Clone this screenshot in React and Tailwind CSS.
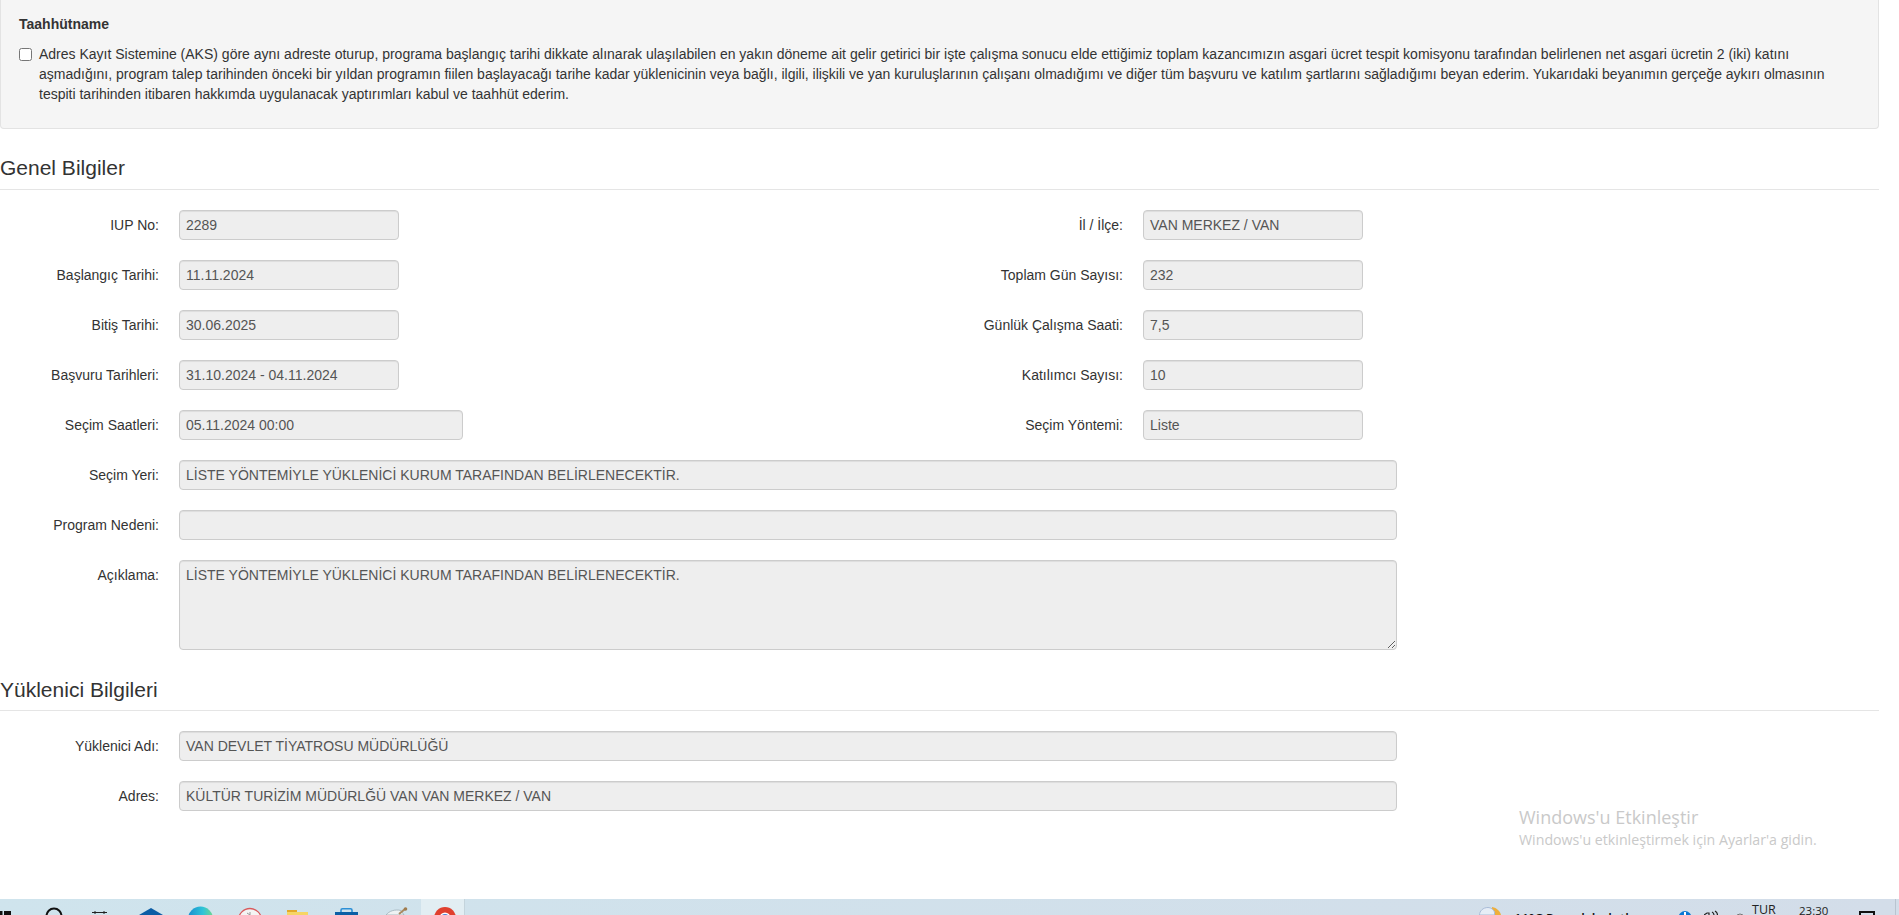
const SANS = "font-['Liberation_Sans',Arial,sans-serif]";

const leftRows = [
  ["IUP No:", "2289", "w-[220px]"],
  ["Başlangıç Tarihi:", "11.11.2024", "w-[220px]"],
  ["Bitiş Tarihi:", "30.06.2025", "w-[220px]"],
  ["Başvuru Tarihleri:", "31.10.2024 - 04.11.2024", "w-[220px]"],
  ["Seçim Saatleri:", "05.11.2024 00:00", "w-[284px]"],
];
const rightRows = [
  ["İl / İlçe:", "VAN MERKEZ / VAN"],
  ["Toplam Gün Sayısı:", "232"],
  ["Günlük Çalışma Saati:", "7,5"],
  ["Katılımcı Sayısı:", "10"],
  ["Seçim Yöntemi:", "Liste"],
];

function Field({ label, value, labelW = "w-[159px]", inputW = "w-[1218px]" }) {
  return (
    <div className="flex items-center gap-[20px]">
      <span className={`${labelW} shrink-0 text-right text-[14px] text-[#333]`}>{label}</span>
      <div className={`${inputW} h-[30px] rounded-[4px] border border-[#ccc] bg-[#eee] px-[6px] text-[14px] leading-[28px] text-[#555] shadow-[inset_0_1px_1px_rgba(0,0,0,0.075)]`}>
        {value}
      </div>
    </div>
  );
}

function Heading({ children, pb }) {
  return (
    <div className={`w-[1879px] border-b border-[#e5e5e5] text-[21px] leading-[30px] text-[#333] ${pb}`}>{children}</div>
  );
}

// every taskbar icon is a 16px tall strip, the rest is below the edge of the shot
function Strip({ w, ml, children }) {
  return (
    <svg width={w} height="16" viewBox={`0 0 ${w} 16`} className={`block shrink-0 ${ml}`}>
      {children}
    </svg>
  );
}

function Taskbar() {
  return (
    <div className="flex h-[16px] shrink-0 items-start overflow-hidden bg-linear-to-r from-[#cfe4ed] to-[#d3dde9]">
      <Strip w={11} ml="ml-0">
        <rect x="0" y="12" width="2.5" height="4" fill="#111" />
        <rect x="4" y="12" width="7" height="4" fill="#111" />
      </Strip>
      <Strip w={18} ml="ml-[34px]">
        <circle cx="9" cy="17" r="7.5" fill="none" stroke="#111" strokeWidth="2" />
      </Strip>
      <Strip w={15} ml="ml-[29px]">
        <path d="M0 13.5H15M3 12V15M12 12V15" stroke="#222" strokeWidth="1" fill="none" />
      </Strip>
      <Strip w={24} ml="ml-[32px]">
        <path d="M12 9L24 16H0Z" fill="#0c5da5" />
      </Strip>
      <Strip w={25} ml="ml-[25px]">
        <defs>
          <linearGradient id="edge" x1="0" x2="1" y1="0" y2="0">
            <stop offset="0" stopColor="#1a8ecf" />
            <stop offset="0.6" stopColor="#2fc4d8" />
            <stop offset="1" stopColor="#6fd68c" />
          </linearGradient>
        </defs>
        <circle cx="12.5" cy="20" r="12.5" fill="url(#edge)" />
      </Strip>
      <Strip w={24} ml="ml-[25px]">
        <circle cx="12" cy="21" r="11.5" fill="#f4f4f4" stroke="#d9595c" strokeWidth="1.3" />
        <path d="M12 13V16M9 14L12 16" stroke="#999" strokeWidth="1" fill="none" />
      </Strip>
      <Strip w={21} ml="ml-[25px]">
        <rect x="0" y="11" width="10" height="5" fill="#e3a92b" />
        <rect x="0" y="13" width="21" height="3" fill="#f6d565" />
      </Strip>
      <Strip w={23} ml="ml-[27px]">
        <rect x="6" y="9.7" width="11" height="6" rx="1.5" fill="none" stroke="#2b8fd6" strokeWidth="1.6" />
        <rect x="0" y="13" width="23" height="3" fill="#0b5fa5" />
      </Strip>
      <Strip w={22} ml="ml-[28px]">
        <path d="M0 16C3 12 9 10 15 11.5L18 16Z" fill="#eef2f3" stroke="#9db0b8" strokeWidth="0.8" />
        <path d="M13 15L19 10" stroke="#a88a62" strokeWidth="2" />
        <circle cx="19.5" cy="10" r="1.8" fill="#a07c4e" />
      </Strip>
      {/* active chrome tile */}
      <div className="ml-[13px] h-[16px] w-[44px] shrink-0 border-r border-[#c4d4dc] bg-[#e2eef3] pl-[13px]">
        <Strip w={22} ml="ml-0">
          <circle cx="11" cy="19" r="11" fill="#e0402f" />
          <path d="M11 19L22 16V22H11Z" fill="#f4c534" />
          <circle cx="11" cy="19" r="5.5" fill="#fff" />
          <circle cx="11" cy="19" r="4" fill="#4a80d8" />
        </Strip>
      </div>

      {/* tray */}
      <Strip w={22} ml="ml-[1014px]">
        <path d="M13 8C18 9 21 12 22 16H13Z" fill="#eeaf3c" />
        <path d="M0.5 16C0.5 12 4 8.5 9 8.5C12 8.5 14.5 10.5 15.5 13V16Z" fill="#e6edf6" stroke="#a9bcd8" strokeWidth="1" />
      </Strip>
      <div className="ml-[13px] w-[110px] shrink-0 pt-[10px] font-['Open_Sans',sans-serif] text-[13px] leading-[18px] font-semibold whitespace-nowrap text-[#111]">
        11°C Parçalı bulutlu
      </div>
      <Strip w={12} ml="ml-[55px]">
        <circle cx="6" cy="18.5" r="6.5" fill="#0a78d4" />
        <rect x="5" y="13" width="2" height="3" fill="#fff" />
      </Strip>
      <Strip w={14} ml="ml-[13px]">
        <path d="M0 16L3 14H5V16M8 13Q10 14 10 16M11 12Q13.5 13.5 13.5 16" stroke="#222" strokeWidth="1.2" fill="none" />
      </Strip>
      <Strip w={6} ml="ml-[19px]">
        <path d="M0 16L3 15L6 16" stroke="#777" strokeWidth="1" fill="none" />
      </Strip>
      <div className="ml-[9px] w-[22px] shrink-0 pt-[2px] font-['Open_Sans',sans-serif] text-[12.5px] leading-[18px] text-[#222]">TUR</div>
      <div className="ml-[25px] w-[30px] shrink-0 pt-[3px] font-['Open_Sans',sans-serif] text-[11.5px] leading-[18px] text-[#222]">23:30</div>
      <Strip w={16} ml="ml-[30px]">
        <path d="M1 16V13H15V16" stroke="#111" strokeWidth="2" fill="none" />
      </Strip>
      <div className="ml-[20px] h-[16px] w-[1px] shrink-0 bg-[#b9c4d0]"></div>
    </div>
  );
}

export default function App() {
  return (
    <div className={`${SANS} relative flex h-[915px] flex-col overflow-hidden bg-white`}>
      {/* panel */}
      <div className="h-[129px] w-[1879px] shrink-0 rounded-b-[4px] border-x border-b border-[#e3e3e3] bg-[#f5f5f5] pl-[18px] pt-[16px] text-[14px] text-[#333]">
        <div className="text-[14px] font-bold leading-[16px]">Taahhütname</div>
        <div className="mt-[12px] flex">
          <input type="checkbox" readOnly className="mt-[4px] h-[13px] w-[13px] shrink-0" />
          <p className="ml-[7px] text-[14px] leading-[20px] whitespace-nowrap">
            Adres Kayıt Sistemine (AKS) göre aynı adreste oturup, programa başlangıç tarihi dikkate alınarak ulaşılabilen en yakın döneme ait gelir getirici bir işte çalışma sonucu elde ettiğimiz toplam kazancımızın asgari ücret tespit komisyonu tarafından belirlenen net asgari ücretin 2 (iki) katını
            <br />
            aşmadığını, program talep tarihinden önceki bir yıldan programın fiilen başlayacağı tarihe kadar yüklenicinin veya bağlı, ilgili, ilişkili ve yan kuruluşlarının çalışanı olmadığımı ve diğer tüm başvuru ve katılım şartlarını sağladığımı beyan ederim. Yukarıdaki beyanımın gerçeğe aykırı olmasının
            <br />
            tespiti tarihinden itibaren hakkımda uygulanacak yaptırımları kabul ve taahhüt ederim.
          </p>
        </div>
      </div>

      {/* genel bilgiler */}
      <div className="mt-[24px]">
        <Heading pb="pb-[6px]">Genel Bilgiler</Heading>
      </div>
      <div className="mt-[20px] flex flex-col gap-[20px]">
        {leftRows.map(([label, value, w], i) => (
          <div key={label} className="flex">
            <div className="w-[963px] shrink-0">
              <Field label={label} value={value} inputW={w} />
            </div>
            <Field label={rightRows[i][0]} value={rightRows[i][1]} labelW="w-[160px]" inputW="w-[220px]" />
          </div>
        ))}
        <Field label="Seçim Yeri:" value="LİSTE YÖNTEMİYLE YÜKLENİCİ KURUM TARAFINDAN BELİRLENECEKTİR." />
        <Field label="Program Nedeni:" value="" />
        <div className="flex items-start gap-[20px]">
          <span className="w-[159px] shrink-0 pt-[5px] text-right text-[14px] leading-[20px] text-[#333]">Açıklama:</span>
          <textarea
            readOnly
            disabled
            value="LİSTE YÖNTEMİYLE YÜKLENİCİ KURUM TARAFINDAN BELİRLENECEKTİR."
            className="block h-[90px] w-[1218px] rounded-[4px] border border-[#ccc] bg-[#eee] px-[6px] py-[4px] text-[14px] leading-[20px] text-[#555] opacity-100 resize-y shadow-[inset_0_1px_1px_rgba(0,0,0,0.075)]"
          />
        </div>
      </div>

      {/* yuklenici */}
      <div className="mt-[25px]">
        <Heading pb="pb-[5px]">Yüklenici Bilgileri</Heading>
      </div>
      <div className="mt-[20px] flex flex-col gap-[20px]">
        <Field label="Yüklenici Adı:" value="VAN DEVLET TİYATROSU MÜDÜRLÜĞÜ" />
        <Field label="Adres:" value="KÜLTÜR TURİZİM MÜDÜRLĞÜ VAN VAN MERKEZ / VAN" />
      </div>

      <div className="mt-auto">
        <Taskbar />
      </div>

      {/* windows watermark */}
      <div className="absolute left-[1519px] top-[805px] font-['Open_Sans',sans-serif] text-[#c9c9c9]">
        <div className="text-[18px] leading-[24px]">Windows'u Etkinleştir</div>
        <div className="mt-[1px] text-[14.2px] leading-[20px]">Windows'u etkinleştirmek için Ayarlar'a gidin.</div>
      </div>
    </div>
  );
}
